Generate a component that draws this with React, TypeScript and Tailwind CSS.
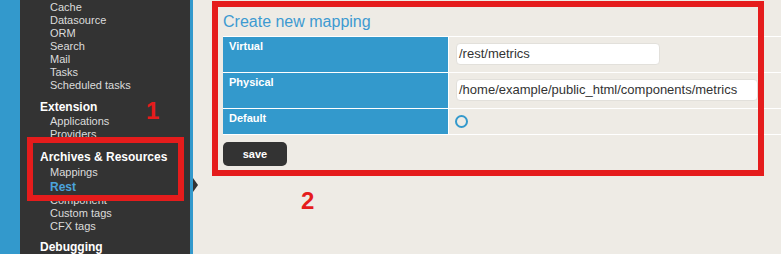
import React from "react";

const font = { fontFamily: '"Liberation Sans", Arial, sans-serif' };

function Item({ children, active = false }: { children: React.ReactNode; active?: boolean }) {
  return active ? (
    <div className="h-[15px] leading-[16px] pl-[30px] text-[12px] font-bold text-[#4ba4dc] whitespace-nowrap">{children}</div>
  ) : (
    <div className="h-[13px] leading-[13px] pl-[30px] text-[11px] text-[#dcdcdc] whitespace-nowrap">{children}</div>
  );
}

function Header({ children, mt }: { children: React.ReactNode; mt: string }) {
  return (
    <div className={`h-[16px] leading-[16px] pl-[20px] text-[12px] font-bold text-white whitespace-nowrap ${mt}`}>{children}</div>
  );
}

export default function App() {
  return (
    <div className="relative flex w-[781px] h-[254px] overflow-hidden bg-[#eeebe5]" style={font}>
      {/* Sidebar */}
      <div className="flex h-full shrink-0">
        <div className="w-[20px] bg-[#3399cc]" />
        <div className="w-[170px] bg-[#333333] pt-[1px] overflow-hidden">
          <Item>Cache</Item>
          <Item>Datasource</Item>
          <Item>ORM</Item>
          <Item>Search</Item>
          <Item>Mail</Item>
          <Item>Tasks</Item>
          <Item>Scheduled tasks</Item>
          <Header mt="mt-[7px]">Extension</Header>
          <Item>Applications</Item>
          <Item>Providers</Item>
          <Header mt="mt-[8px]">Archives &amp; Resources</Header>
          <div className="mt-[1px]" />
          <Item>Mappings</Item>
          <Item active>Rest</Item>
          <Item>Component</Item>
          <Item>Custom tags</Item>
          <Item>CFX tags</Item>
          <Header mt="mt-[6px]">Debugging</Header>
        </div>
        <div className="w-[3px] bg-[#3399cc]" />
      </div>

      {/* Arrow pointing at active item */}
      <div className="absolute left-[193px] top-[178px] w-0 h-0 border-y-[7px] border-y-transparent border-l-[5px] border-l-[#333333]" />

      {/* Main */}
      <div className="flex-1 pl-[30px] pt-[12px]">
        <div className="text-[16px] leading-[19px] text-[#3d9ad1]">Create new mapping</div>
        <div className="mt-[5px] grid grid-cols-[225px_1fr] gap-[1px] bg-white py-[1px]">
          <div className="bg-[#3399cc] h-[35px] pl-[6px] pt-[3px] text-[11px] leading-[13px] font-bold text-white">Virtual</div>
          <div className="bg-[#eeebe5] h-[35px] pl-[7px] pt-[6px]">
            <div className="w-[204px] h-[22px] rounded-[4px] bg-white border border-[#e2e0db] pl-[2px] text-[13px] leading-[20px] text-[#333]">/rest/metrics</div>
          </div>
          <div className="bg-[#3399cc] h-[35px] pl-[6px] pt-[3px] text-[11px] leading-[13px] font-bold text-white">Physical</div>
          <div className="bg-[#eeebe5] h-[35px] pl-[7px] pt-[6px]">
            <div className="w-[302px] h-[22px] rounded-[4px] bg-white border border-[#e2e0db] pl-[2px] text-[13px] leading-[20px] text-[#333] whitespace-nowrap">/home/example/public_html/components/metrics</div>
          </div>
          <div className="bg-[#3399cc] h-[25px] pl-[6px] pt-[3px] text-[11px] leading-[13px] font-bold text-white">Default</div>
          <div className="bg-[#eeebe5] h-[25px] pl-[6px] pt-[6px]">
            <div className="w-[13px] h-[13px] rounded-full border-2 border-[#3399cc]" />
          </div>
        </div>
        <button className="mt-[7px] w-[64px] h-[24px] rounded-[5px] bg-[#333333] text-white text-[11px] font-bold leading-[24px]">
          save
        </button>
      </div>

      {/* Annotations */}
      <div className="absolute left-[27px] top-[137px] w-[157px] h-[64px] border-[6px] border-[#e51c1c]" />
      <div className="absolute left-[146px] top-[97px] text-[24px] leading-[28px] font-bold text-[#e51c1c]">1</div>
      <div className="absolute left-[212px] top-[1px] w-[552px] h-[175px] border-[6px] border-[#e51c1c]" />
      <div className="absolute left-[301px] top-[187px] text-[24px] leading-[28px] font-bold text-[#e51c1c]">2</div>
    </div>
  );
}
